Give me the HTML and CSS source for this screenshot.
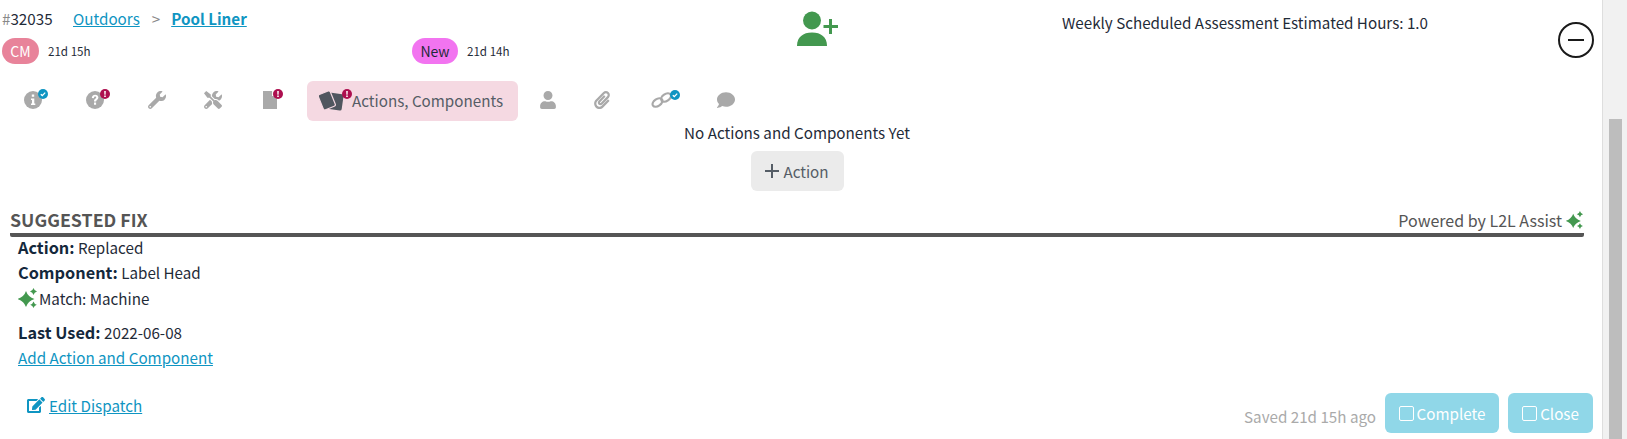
FILE: index.html
```html
<!DOCTYPE html>
<html lang="en">

<head>
    <meta charset="UTF-8">
    <title>Dispatch 32035</title>
    <link rel="stylesheet" href="styles.css">
</head>

<body>
    <svg class="sprite" width="0" height="0">
        <symbol id="sparkle" viewBox="0 0 20 20">
            <path d="M8 3Q10 9 16.500 11Q10 13 8 19Q6 13 -0.500 11Q6 9 8 3z" />
            <path d="M15.500 0Q16.200 2.800 19 3.500Q16.200 4.200 15.500 7Q14.800 4.200 12 3.500Q14.800 2.800 15.500 0z" />
            <path d="M15.500 13.500Q16.200 16 18.800 16.700Q16.200 17.400 15.500 20Q14.800 17.400 12.200 16.700Q14.800 16 15.500 13.500z" />
        </symbol>
        <symbol id="badge-check" viewBox="0 0 10 10">
            <circle cx="5" cy="5" r="5" fill="#0f95c2" />
            <path d="M2.800 5.200L4.300 6.600L7.200 3.600" fill="none" stroke="#fff" stroke-width="1.300" />
        </symbol>
        <symbol id="badge-alert" viewBox="0 0 10 10">
            <circle cx="5" cy="5" r="5" fill="#ad0f4f" />
            <path d="M4.200 2h1.600l-.2 3.800H4.400zM4.200 6.500h1.600v1.500H4.200z" fill="#fff" />
        </symbol>
    </svg>

    <div class="page">
        <main class="content">
            <header class="ticket-head">
                <div class="ticket-info">
                    <div class="crumbs">
                        <span class="ticket-no"><span class="hash">#</span>32035</span>
                        <a href="#" class="crumb">Outdoors</a>
                        <span class="crumb-sep">&gt;</span>
                        <a href="#" class="crumb crumb-current">Pool Liner</a>
                    </div>
                    <div class="status-row">
                        <div class="status status-first">
                            <span class="pill pill-cm">CM</span>
                            <span class="age">21d 15h</span>
                        </div>
                        <div class="status">
                            <span class="pill pill-new">New</span>
                            <span class="age">21d 14h</span>
                        </div>
                    </div>
                </div>
                <div class="assign">
                    <svg class="assign-icon" viewBox="0 0 43 35">
                        <circle cx="15" cy="9.500" r="9" />
                        <path d="M0 35C0 26 6 21.500 15 21.500S30 26 30 35z" />
                        <path d="M32 8v6h-5.500v3H32v6h3v-6h6v-3h-6V8z" />
                    </svg>
                </div>
                <div class="hours">Weekly Scheduled Assessment Estimated Hours: 1.0</div>
                <button class="collapse-btn" aria-label="Collapse"><span></span></button>
            </header>

            <nav class="tabs">
                <a class="tab" href="#">
                    <span class="tab-icon">
                        <svg class="ic ic-round" viewBox="0 0 18 18">
                            <circle cx="9" cy="9" r="9" fill="#a9a9a9" />
                            <path d="M7.800 3.500h2.400v2.200H7.800zM7 7.500h3.300v5h1v1.500H7v-1.500h1v-3.500H7z" fill="#fff" />
                        </svg>
                        <svg class="badge"><use href="#badge-check" /></svg>
                    </span>
                </a>
                <a class="tab" href="#">
                    <span class="tab-icon">
                        <svg class="ic ic-round" viewBox="0 0 18 18">
                            <circle cx="9" cy="9" r="9" fill="#a9a9a9" />
                            <path d="M5.800 7C6 4.800 7.500 3.800 9.200 3.800C11 3.800 12.400 5 12.400 6.600C12.400 8.800 10.100 8.800 10.100 10.500H8C8 7.800 10.200 7.800 10.200 6.600C10.200 6 9.800 5.600 9.100 5.600C8.400 5.600 8 6.100 7.900 7.200zM8 11.500h2.100v2.300H8z" fill="#fff" />
                        </svg>
                        <svg class="badge"><use href="#badge-alert" /></svg>
                    </span>
                </a>
                <a class="tab" href="#">
                    <svg class="ic ic-wrench" viewBox="0 0 512 512"><path d="M507.730 109.100c-2.240-9.030-13.540-12.090-20.120-5.510l-74.360 74.360-67.880-11.310-11.310-67.880 74.360-74.360c6.620-6.620 3.430-17.900-5.660-20.160-47.380-11.740-99.550.91-136.580 37.930-39.640 39.640-50.550 97.100-34.050 147.200L18.740 402.760c-24.990 24.990-24.990 65.510 0 90.500 24.990 24.990 65.510 24.990 90.500 0l213.210-213.210c50.120 16.710 107.470 5.680 147.370-34.220 37.070-37.070 49.700-89.320 37.910-136.730zM64 472c-13.250 0-24-10.750-24-24 0-13.260 10.750-24 24-24s24 10.740 24 24c0 13.250-10.750 24-24 24z" /></svg>
                </a>
                <a class="tab" href="#">
                    <svg class="ic ic-tools" viewBox="0 0 512 512"><path d="M501.100 395.700L384 278.600c-23.100-23.100-57.600-27.600-85.400-13.900L192 158.100V96L64 0 0 64l96 128h62.100l106.600 106.600c-13.600 27.800-9.200 62.300 13.900 85.400l117.100 117.100c14.600 14.600 38.200 14.600 52.700 0l52.700-52.700c14.500-14.600 14.500-38.200 0-52.700zM331.700 225c28.300 0 54.900 11 74.900 31l19.400 19.400c15.800-6.900 30.800-16.500 43.800-29.500 37.100-37.100 49.700-89.300 37.900-136.700-2.200-9-13.500-12.100-20.100-5.500l-74.400 74.400-67.900-11.300L334 98.900l74.400-74.400c6.600-6.600 3.400-17.900-5.700-20.200-47.400-11.700-99.600.9-136.600 37.900-28.500 28.500-41.900 66.100-41.200 103.600l82.100 82.100c8.100-1.900 16.500-2.900 24.700-2.900zm-103.900 82l-56.700-56.700L18.700 402.800c-25 25-25 65.500 0 90.500s65.500 25 90.500 0l123.600-123.600c-7.600-19.900-9.900-41.600-5-62.700zM64 472c-13.200 0-24-10.800-24-24 0-13.300 10.700-24 24-24s24 10.700 24 24c0 13.200-10.700 24-24 24z" /></svg>
                </a>
                <a class="tab tab-file" href="#">
                    <span class="tab-icon tab-icon-file">
                        <svg class="ic ic-file" viewBox="0 0 14 18">
                            <path d="M0 0h9v5h5v13H0z" fill="#a9a9a9" />
                            <path d="M9.800 0L14 4.200H9.800z" fill="#cfdccf" />
                        </svg>
                        <svg class="badge"><use href="#badge-alert" /></svg>
                    </span>
                </a>
                <a class="tab tab-active" href="#">
                    <span class="tab-icon tab-icon-actions">
                        <svg class="ic ic-actions" viewBox="2 1 21 17">
                            <rect x="10" y="3" width="12" height="14" rx="1.500" fill="#50565f" transform="rotate(8 16 10)" />
                            <rect x="3" y="2" width="11" height="14" rx="1.500" fill="#50565f" stroke="#f5d9e2" stroke-width="1" transform="rotate(-22 8.500 9)" />
                        </svg>
                        <svg class="badge"><use href="#badge-alert" /></svg>
                    </span>
                    <span class="tab-label">Actions, Components</span>
                </a>
                <a class="tab tab-after" href="#">
                    <svg class="ic ic-user" viewBox="0 0 448 512"><path d="M224 256c70.700 0 128-57.300 128-128S294.700 0 224 0 96 57.300 96 128s57.300 128 128 128zm89.600 32h-16.700c-22.200 10.200-46.900 16-72.900 16s-50.600-5.800-72.900-16h-16.700C60.200 288 0 348.200 0 422.400V464c0 26.500 21.500 48 48 48h352c26.500 0 48-21.500 48-48v-41.600c0-74.200-60.200-134.400-134.400-134.400z" /></svg>
                </a>
                <a class="tab" href="#">
                    <svg class="ic ic-clip" viewBox="0 0 448 512"><path d="M43.246 466.142c-58.430-60.289-57.341-157.511 1.386-217.581L254.392 34c44.316-45.332 116.351-45.336 160.671 0 43.890 44.894 43.943 117.329 0 162.276L232.214 383.128c-29.855 30.537-78.633 30.111-107.982-.998-28.275-29.970-27.368-77.473 1.452-106.953l143.743-146.835c6.182-6.314 16.312-6.422 22.626-.241l22.861 22.379c6.315 6.182 6.422 16.312.241 22.626L171.427 319.927c-4.932 5.045-5.236 13.428-.648 18.292 4.372 4.634 11.245 4.711 15.688.165l182.849-186.851c19.613-20.062 19.613-52.725-.011-72.798-19.189-19.627-49.957-19.637-69.154 0L90.390 293.295c-34.763 35.560-35.299 93.120-1.191 128.313 34.010 35.093 88.985 35.137 123.058.286l172.060-175.999c6.177-6.319 16.307-6.433 22.626-.256l22.877 22.364c6.319 6.177 6.434 16.307.256 22.626l-172.060 175.998c-59.576 60.938-155.943 60.216-214.770-.485z" /></svg>
                </a>
                <a class="tab tab-link" href="#">
                    <span class="tab-icon tab-icon-link">
                        <svg class="ic ic-link" viewBox="0 0 22 16" stroke="#a9a9a9" stroke-width="2.200">
                            <ellipse cx="6.500" cy="10.500" rx="5.500" ry="3.400" transform="rotate(-35 6.500 10.500)" />
                            <ellipse cx="15" cy="5.500" rx="5.500" ry="3.400" transform="rotate(-35 15 5.500)" />
                        </svg>
                        <svg class="badge"><use href="#badge-check" /></svg>
                    </span>
                </a>
                <a class="tab tab-chat" href="#">
                    <svg class="ic ic-chat" viewBox="0 0 512 512"><path d="M256 32C114.600 32 0 125.100 0 240c0 49.600 21.400 95 57 130.700C44.500 421.100 2.700 466 2.200 466.500c-2.200 2.300-2.800 5.700-1.500 8.700S4.800 480 8 480c66.300 0 116-31.800 140.600-51.400 32.700 12.300 69 19.400 107.400 19.400 141.400 0 256-93.100 256-208S397.400 32 256 32z" /></svg>
                </a>
            </nav>

            <section class="actions-empty">
                <p>No Actions and Components Yet</p>
                <button class="add-action"><span class="plus"></span>Action</button>
            </section>

            <section class="suggested">
                <div class="suggested-head">
                    <h4>SUGGESTED FIX</h4>
                    <div class="powered">Powered by L2L Assist <svg class="spark"><use href="#sparkle" /></svg></div>
                </div>
                <div class="suggested-body">
                    <div class="line"><b>Action:</b> Replaced</div>
                    <div class="line"><b>Component:</b> Label Head</div>
                    <div class="line line-match"><svg class="spark"><use href="#sparkle" /></svg> Match: Machine</div>
                    <div class="line line-used"><b>Last Used:</b> 2022-06-08</div>
                    <a href="#" class="add-link">Add Action and Component</a>
                </div>
            </section>

            <footer class="foot">
                <a href="#" class="edit-link">
                    <svg class="ic-edit" viewBox="0 0 576 512"><path d="M402.600 83.200l90.200 90.200c3.800 3.800 3.800 10 0 13.800L274.400 405.600l-92.800 10.300c-12.400 1.400-22.900-9.100-21.500-21.500l10.300-92.800L388.800 83.200c3.800-3.800 10-3.800 13.800 0zm162-22.900l-48.800-48.800c-15.200-15.200-39.900-15.200-55.200 0l-35.400 35.400c-3.800 3.800-3.800 10 0 13.800l90.200 90.200c3.800 3.800 10 3.800 13.800 0l35.400-35.400c15.200-15.300 15.200-40 0-55.200zM384 346.200V448H64V128h229.800c3.200 0 6.200-1.300 8.500-3.500l40-40c7.600-7.600 2.200-20.500-8.500-20.500H48C21.500 64 0 85.500 0 112v352c0 26.500 21.500 48 48 48h352c26.500 0 48-21.500 48-48V306.200c0-10.700-12.900-16-20.500-8.500l-40 40c-2.200 2.300-3.500 5.300-3.500 8.500z" /></svg>
                    Edit Dispatch
                </a>
                <div class="foot-right">
                    <span class="saved">Saved 21d 15h ago</span>
                    <button class="btn-check btn-complete"><span class="box"></span>Complete</button>
                    <button class="btn-check btn-close"><span class="box"></span>Close</button>
                </div>
            </footer>
        </main>
        <div class="scrollbar"><div class="thumb"></div></div>
    </div>
</body>

</html>
```

FILE: styles.css
```css
/* General Styles */
html,
body {
    margin: 0;
    padding: 0;
    height: 439px;
    overflow: hidden;
}

body {
    font-family: "Noto Sans CJK SC", "Noto Sans", sans-serif;
    font-size: 15.200px;
    line-height: 24px;
    color: #1f2b38;
    background: #fff;
}

a {
    color: #0f95c2;
}

.sprite {
    display: block;
    height: 0;
}

.page {
    display: flex;
    height: 439px;
}

.content {
    width: 1602px;
    flex: none;
}

.scrollbar {
    flex: 1;
    background: #f1f1f1;
    border-left: 1px solid #dedede;
    padding: 119px 5px 0 6px;
}

.thumb {
    height: 320px;
    background: #bdbdbd;
}

/* Header */
.ticket-head {
    height: 81px;
    display: flex;
    box-sizing: border-box;
}

.ticket-info {
    width: 797px;
    flex: none;
    padding: 6px 0 0 2px;
    box-sizing: border-box;
}

.crumbs {
    display: flex;
    height: 24px;
}

.ticket-no {
    width: 71px;
}

.hash {
    color: #888;
}

.crumb-sep {
    color: #888;
    margin: 0 11px 0 12px;
}

.crumb-current {
    font-weight: 700;
}

.status-row {
    display: flex;
    margin-top: 8px;
}

.status {
    display: flex;
    align-items: center;
    gap: 9px;
}

.status-first {
    width: 410px;
}

.pill {
    height: 26px;
    line-height: 26px;
    border-radius: 13px;
    text-align: center;
    font-size: 14px;
}

.pill-cm {
    width: 37px;
    background: #e8839a;
    color: #fff;
}

.pill-new {
    width: 46px;
    background: #f274f0;
    color: #1f2b38;
}

.age {
    font-size: 11.600px;
}

.assign {
    width: 265px;
    flex: none;
    padding-top: 11px;
}

.assign-icon {
    display: block;
    width: 43px;
    height: 35px;
    fill: #43984f;
}

.hours {
    width: 496px;
    flex: none;
    padding-top: 10px;
    height: 24px;
}

.collapse-btn {
    width: 36px;
    height: 36px;
    margin: 22px 0 0 0;
    padding: 0;
    flex: none;
    border: 2px solid #1a1a1a;
    border-radius: 50%;
    background: #fff;
    display: flex;
    align-items: center;
    justify-content: center;
}

.collapse-btn span {
    display: block;
    width: 16px;
    height: 2px;
    background: #1a1a1a;
}

/* Tabs */
.tabs {
    display: flex;
    gap: 2px;
    padding-left: 6px;
    height: 40px;
}

.tab {
    display: flex;
    align-items: center;
    padding: 0 18px 2px;
    box-sizing: border-box;
    color: #555d66;
    text-decoration: none;
    border-radius: 6px;
}

.tab-file {
    margin-left: 3px;
}

.tab-active {
    margin-left: 4px;
    padding: 0 15px 2px 14px;
    background: #f5d9e2;
}

.tab-label {
    padding-bottom: 1px;
}

.tab-after {
    margin-left: 2px;
}

.tab-link {
    margin-left: 3px;
}

.tab-chat {
    margin-left: -1px;
}

.tab-icon {
    position: relative;
    display: block;
    width: 24px;
    height: 18px;
}

.tab-icon-file {
    width: 20px;
}

.tab-icon-actions {
    width: 31px;
}

.tab-icon-link {
    width: 29px;
    height: 16px;
}

.ic {
    display: block;
    fill: #a9a9a9;
}

.ic-round {
    width: 18px;
    height: 18px;
}

.ic-wrench {
    width: 18px;
    height: 18px;
}

.ic-tools {
    width: 18px;
    height: 18px;
}

.ic-file {
    width: 14px;
    height: 18px;
}

.ic-actions {
    width: 25px;
    height: 20px;
    margin-left: -2px;
}

.ic-user {
    width: 16px;
    height: 18px;
}

.ic-clip {
    width: 16px;
    height: 18px;
}

.ic-link {
    width: 22px;
    height: 16px;
    fill: none;
}

.ic-chat {
    width: 18px;
    height: 18px;
}

.badge {
    position: absolute;
    top: -2px;
    right: 0;
    width: 10px;
    height: 10px;
}

/* No actions */
.actions-empty {
    text-align: center;
    margin-right: 8px;
}

.actions-empty p {
    margin: 0;
    height: 30px;
    line-height: 22px;
}

.add-action {
    width: 93px;
    height: 40px;
    border: none;
    border-radius: 6px;
    background: #ebebeb;
    color: #555d66;
    font: inherit;
    display: inline-flex;
    align-items: center;
    justify-content: center;
    gap: 4px;
}

.plus {
    position: relative;
    display: block;
    width: 14px;
    height: 2px;
    background: #555d66;
}

.plus::after {
    content: "";
    position: absolute;
    left: 6px;
    top: -6px;
    width: 2px;
    height: 14px;
    background: #555d66;
}

/* Suggested fix */
.suggested {
    margin-top: 18px;
}

.suggested-head {
    margin: 0 18px 0 10px;
    height: 24px;
    display: flex;
    justify-content: space-between;
    border-bottom: 4px solid #555;
    border-radius: 2px;
}

.suggested-head h4 {
    margin: -2px 0 0;
    font-size: 17.800px;
    font-weight: 700;
    color: #555;
}

.powered {
    display: flex;
    align-items: center;
    gap: 4px;
    height: 22px;
    font-size: 16px;
    color: #555;
}

.spark {
    width: 18px;
    height: 18px;
    fill: #43984f;
    flex: none;
}

.line-match .spark {
    width: 20px;
    height: 20px;
}

.suggested-body {
    padding-left: 18px;
    margin-top: -2px;
}

.line {
    height: 25px;
    margin-top: -1px;
    margin-bottom: 1px;
}

.line b {
    font-size: 16.300px;
    color: #14283c;
}

.line-match {
    display: flex;
    align-items: center;
    gap: 1px;
    height: 26px;
}

.line-used {
    margin-top: 9px;
}

.add-link {
    display: block;
    margin-top: -1px;
}

/* Footer */
.foot {
    display: flex;
    justify-content: space-between;
    margin-top: 24px;
    padding: 0 9px 0 27px;
}

.edit-link {
    display: flex;
    align-items: center;
    gap: 4px;
    height: 24px;
}

.ic-edit {
    width: 18px;
    height: 16px;
    fill: #0f95c2;
}

.foot-right {
    display: flex;
    align-items: center;
}

.saved {
    color: #aaa;
    margin-right: 9px;
    padding-top: 6px;
}

.btn-check {
    height: 40px;
    border: none;
    border-radius: 6px;
    background: #90d7e8;
    color: #fff;
    font: inherit;
    display: flex;
    align-items: center;
    justify-content: center;
    gap: 3px;
    padding: 0;
}

.btn-complete {
    width: 114px;
    margin-right: 9px;
}

.btn-close {
    width: 85px;
}

.box {
    display: block;
    width: 13px;
    height: 13px;
    border: 1.500px solid #fff;
    border-radius: 2px;
}
```
